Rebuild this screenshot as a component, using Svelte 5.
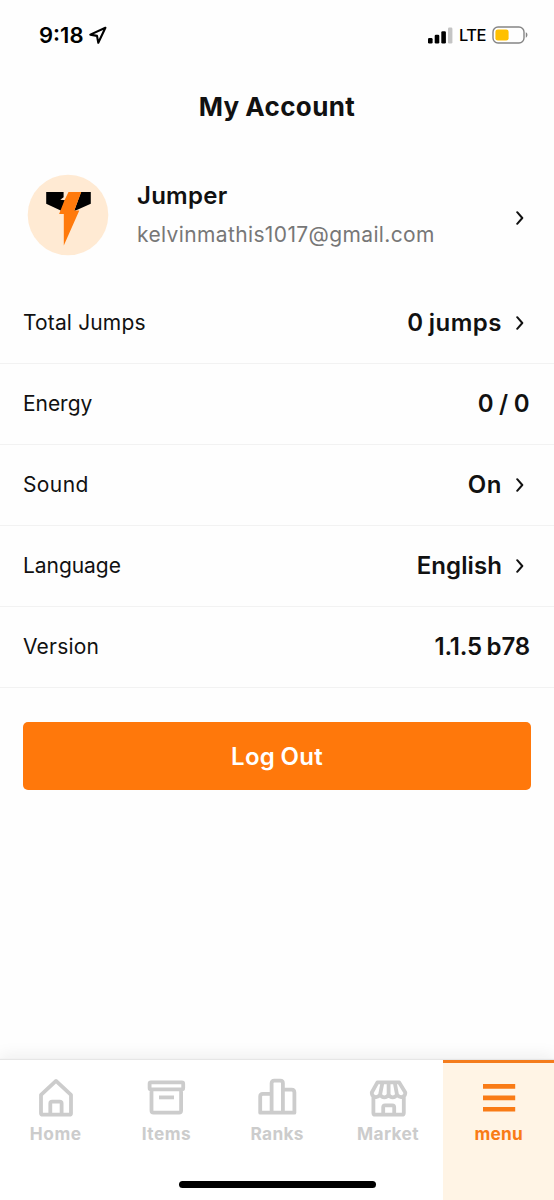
<script>
  const rows = [
    { label: 'Total Jumps', value: '0 jumps', arrow: true, ls: 0.15, vs: 0.5 },
    { label: 'Energy', value: '0 / 0', arrow: false, ls: -0.05, vs: 0.4 },
    { label: 'Sound', value: 'On', arrow: true, ls: 0.4, vs: 0.6 },
    { label: 'Language', value: 'English', arrow: true, ls: -0.05, vs: 0.1 },
    { label: 'Version', value: '1.1.5 b78', arrow: false, ls: 0.2, vs: -0.15 }
  ];
  const tabs = [
    { id: 'home', label: 'Home', ls: 0.6 },
    { id: 'items', label: 'Items', ls: 0.5 },
    { id: 'ranks', label: 'Ranks', ls: 0.3 },
    { id: 'market', label: 'Market', ls: 0.35 },
    { id: 'menu', label: 'menu', ls: 0.25 }
  ];
</script>

{#snippet chevron()}
  <svg class="chevron" width="8" height="14" viewBox="0 0 8 14"><path d="M1.2 1.2 6.3 7 1.2 12.8" /></svg>
{/snippet}

<div class="screen">
  <header class="status">
    <div class="clock">
      <span class="time">9:18</span>
      <svg width="19" height="19" viewBox="0 0 19 19"><path d="M17.4 1.8 2.3 8.6 9 9.9 10.3 16.8Z" fill="none" stroke="#000" stroke-width="2.1" stroke-linejoin="round" /></svg>
    </div>
    <div class="signals">
      <svg width="25" height="17" viewBox="0 0 25 17">
        <rect x="0" y="11" width="4.6" height="5.6" rx="1.3" />
        <rect x="6.7" y="7.8" width="4.6" height="8.8" rx="1.3" />
        <rect x="13.3" y="4.3" width="4.6" height="12.3" rx="1.3" />
        <rect x="20" y="0.5" width="4.4" height="16.1" rx="1.3" fill="#c4c4c4" />
      </svg>
      <span class="lte">LTE</span>
      <svg width="36" height="18" viewBox="0 0 36 18">
        <rect x="1" y="1" width="31" height="16" rx="5" fill="none" stroke="#858585" stroke-width="1.4" />
        <rect x="3.4" y="3.4" width="13.2" height="11.2" rx="2.4" fill="#ffc000" />
        <path d="M33.8 6.3v5.4c2.2-.9 2.2-4.5 0-5.4Z" fill="#858585" />
      </svg>
    </div>
  </header>

  <h1><span>My Account</span></h1>

  <section class="profile">
    <svg class="avatar" width="82" height="82" viewBox="0 0 82 82">
      <circle cx="41" cy="41" r="40.3" fill="#ffead3" />
      <path d="M19.2 18H36.6V23.2L33.3 25.8 38.5 26.3 34.2 36.8 19.2 29.8ZM54 18H63.8V29.8L47 37.2Z" />
      <path d="M41.5 18H54.3L47.3 36.4H52.3L36.8 71.5V40.1H32.1L37.6 26.1Z" fill="#ff7a0c" />
    </svg>
    <div class="who">
      <div class="name">Jumper</div>
      <div class="mail">kelvinmathis1017@gmail.com</div>
    </div>
    {@render chevron()}
  </section>

  <ul class="rows">
    {#each rows as row}
      <li>
        <span class="label" style="letter-spacing: {row.ls}px">{row.label}</span>
        <span class="value" style="letter-spacing: {row.vs}px">{row.value}</span>
        {#if row.arrow}{@render chevron()}{/if}
      </li>
    {/each}
  </ul>

  <button class="logout">Log Out</button>

  <nav>
    {#each tabs as tab}
      <div class="tab" class:active={tab.id === 'menu'}>
        <svg class="icon" width="42" height="42" viewBox="0 0 42 42">
          {#if tab.id === 'home'}
            <path d="M7 36.2V17.8L22 3.9 37 17.8V36.2Q37 37.7 35.4 37.7H8.6Q7 37.7 7 36.2Z M16.3 37V26.4Q16.3 24.6 18.1 24.6H25.8Q27.6 24.6 27.6 26.4V37" />
          {:else if tab.id === 'items'}
            <path d="M5.9 5.4H36.9Q38.2 5.4 38.2 6.7V11Q38.2 12.3 36.9 12.3H5.9Q4.6 12.3 4.6 11V6.7Q4.6 5.4 5.9 5.4ZM6.5 12.3V33.5Q6.5 35.6 8.5 35.6H34.1Q36.1 35.6 36.1 33.5V12.3" />
            <path d="M14 20.4H29" stroke-linecap="butt" />
          {:else if tab.id === 'ranks'}
            <path d="M4.2 35.7V19.6Q4.2 16.9 6.9 16.9H15.6V6.2Q15.6 3.6 18.2 3.6H24.3Q26.9 3.6 26.9 6.2V35.7M26.9 12.7H35.6Q38.4 12.7 38.4 15.5V35.7H4.2M15.6 16.9V35.7" />
          {:else if tab.id === 'market'}
            <path d="M10.4 5.4H32.2L38.3 15.5C38.7 19.8 33.2 22 30 17.7C28 21.3 23.4 21.3 21.6 17.7C19.6 21.3 15 21.3 13.1 17.7C9.9 22 4.4 19.8 4.8 15.5ZM15.5 5.4 13.1 17.7M21.6 5.4V17.7M27.7 5.4 30 17.7M6.4 20V35.9Q6.4 37.6 8.2 37.6H35Q36.8 37.6 36.8 35.9V20M16.2 37V30.2Q16.2 28.3 18 28.3H25.4Q27.2 28.3 27.2 30.2V37" />
          {:else}
            <path class="bars" d="M5 9.4H37.2M5 20.9H37.2M5 32.3H37.2" />
          {/if}
        </svg>
        <span style="letter-spacing: {tab.ls}px; margin-right: {-tab.ls}px">{tab.label}</span>
      </div>
    {/each}
    <div class="handle"></div>
  </nav>
</div>

<style>
  :global(body) { margin: 0; background: #fff; }
  .screen { width: 554px; height: 1200px; display: flex; flex-direction: column; background: #fefefe; color: #111; font-family: Inter, sans-serif; overflow: hidden; }
  .status { height: 70px; flex: none; box-sizing: border-box; display: flex; justify-content: space-between; padding: 0 26px 0 39px; align-items: center; color: #000; }
  .clock, .signals { display: flex; align-items: center; }
  .clock { gap: 5px; }
  .time { font-size: 22px; font-weight: 600; }
  .signals { gap: 6px; }
  .lte { font-size: 16.5px; font-weight: 500; letter-spacing: -0.5px; }
  h1 { margin: 0; height: 73px; flex: none; display: flex; align-items: center; justify-content: center; font-size: 26px; font-weight: 700; letter-spacing: 0.4px; word-spacing: -1px; }
  .profile { height: 139px; flex: none; box-sizing: border-box; display: flex; align-items: flex-start; padding: 31px 30px 0 27px; }
  .avatar { flex: none; }
  .who { flex: 1; padding-left: 28px; }
  .name { height: 42px; line-height: 43px; font-size: 24px; font-weight: 600; letter-spacing: 0.25px; }
  .mail { line-height: 38px; font-size: 21px; letter-spacing: 0.37px; color: #777; }
  .profile .chevron { margin-top: 37px; }
  .chevron { flex: none; fill: none; stroke: #111; stroke-width: 2; stroke-linecap: round; stroke-linejoin: round; }
  .rows { list-style: none; margin: 0; padding: 0; flex: none; }
  .rows li { height: 81px; box-sizing: border-box; border-bottom: 1px solid #f2f2f2; padding: 0 24px 2px 23px; display: flex; align-items: center; }
  .label { flex: 1; font-size: 21px; }
  .value { font-size: 24px; font-weight: 600; word-spacing: -1.3px; }
  .rows li:first-child { height: 82px; padding-bottom: 1px; }
  .rows .chevron { margin: 1px 6px 0 14px; }
  .logout { flex: none; margin: 34px 23px 0; height: 68px; padding: 0; border: 0; border-radius: 5px; background: #ff780b; color: #fff; font: 600 24px Inter, sans-serif; letter-spacing: 0.3px; word-spacing: -1px; }
  nav { position: relative; margin-top: auto; height: 140px; flex: none; display: grid; grid-template-columns: repeat(5, 1fr); box-shadow: 0 -1px 1px #e6e6e6, 0 -4px 16px #eee; background: #fff; }
  .tab { box-sizing: border-box; border-top: 3px solid transparent; display: flex; flex-direction: column; align-items: center; padding-top: 14px; color: #ccc; font-size: 17.3px; font-weight: 700; line-height: 30px; }
  .icon { flex: none; fill: none; stroke: currentColor; stroke-width: 3.8; stroke-linejoin: round; stroke-linecap: round; }
  .bars { stroke-width: 4.6; stroke-linecap: butt; }
  .active { background: #fff4e5; border-color: #f47c1c; color: #f97b16; }
  .handle { position: absolute; left: 179px; bottom: 12px; width: 197px; height: 7px; border-radius: 4px; background: #000; }
</style>
